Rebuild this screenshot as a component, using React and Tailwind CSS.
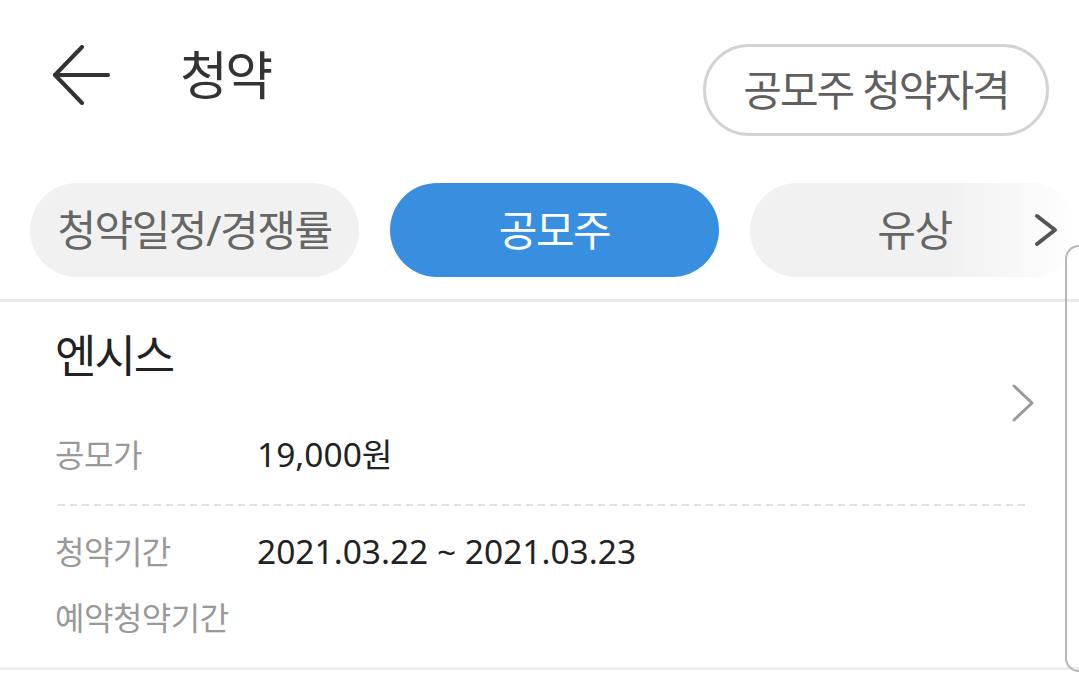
import React from 'react';

const rows = [
  { label: '공모가', value: '19,000원' },
];

function BackArrow() {
  return (
    <svg width="58" height="60" viewBox="0 0 58 60" fill="none" stroke="#333" strokeWidth="4" strokeLinecap="round" strokeLinejoin="round">
      <polyline points="29,2 2,30 29,58" />
      <line x1="2" y1="30" x2="55" y2="30" />
    </svg>
  );
}

function Chevron({ color, width, stroke, w, h }) {
  return (
    <svg width={w} height={h} viewBox={`0 0 ${w} ${h}`} fill="none" stroke={color} strokeWidth={stroke} strokeLinecap="round" strokeLinejoin="round">
      <polyline points={`${width},${width} ${w - width},${h / 2} ${width},${h - width}`} />
    </svg>
  );
}

export default function App() {
  return (
    <div className="relative w-full h-[693px] bg-white overflow-hidden font-['Noto_Sans','Noto_Sans_CJK_KR',sans-serif]">
      {/* header */}
      <div className="h-[183px] pt-[44px] pl-[53px] pr-[30px] flex items-start justify-between">
        <div className="flex items-center h-[60px] mt-[1px]">
          <BackArrow />
          <h1 className="ml-[69px] text-[52px] leading-none tracking-[-2.5px] text-[#333] font-normal">청약</h1>
        </div>
        <button className="w-[346px] h-[92px] rounded-full border-[3px] border-[#d3d3d3] bg-white flex items-center justify-center text-[42px] leading-none tracking-[-2px] text-[#5f5f5f]">
          공모주 청약자격
        </button>
      </div>

      {/* tabs */}
      <div className="relative flex gap-[31px] pl-[30px] h-[94px]">
        <div className="w-[329px] shrink-0 rounded-full bg-[#f1f1f1] flex items-center justify-center text-[42px] leading-none tracking-[-1.5px] text-[#666]">
          청약일정/경쟁률
        </div>
        <div className="w-[329px] shrink-0 rounded-full bg-[#388fdf] flex items-center justify-center text-[42px] leading-none tracking-[-1.5px] text-white">
          공모주
        </div>
        <div className="w-[329px] shrink-0 rounded-full bg-[#f1f1f1] flex items-center justify-center text-[42px] leading-none tracking-[-1.5px] text-[#666]">
          유상
        </div>
        <div className="absolute right-0 top-0 h-full w-[130px] bg-gradient-to-r from-transparent to-white flex items-center justify-end pr-[21px]">
          <Chevron color="#555" width={3} stroke={4} w={24} h={34} />
        </div>
      </div>

      <div className="mt-[22px] h-[3px] bg-[#e9e9e9]" />

      {/* card */}
      <div className="relative pl-[55px] pr-[54px] pt-[31px] pb-[24px]">
        <div className="text-[45px] leading-none tracking-[-2px] text-[#222]">엔시스</div>

        {rows.map(r => (
          <div key={r.label} className="mt-[52px] h-[50px] flex items-center">
            <span className="w-[202px] shrink-0 text-[32px] leading-none tracking-[-0.5px] text-[#999]">{r.label}</span>
            <span className="text-[33.5px] leading-none text-[#222]">{r.value}</span>
          </div>
        ))}

        <div className="mt-[24px] ml-[3px] h-[2px] bg-[repeating-linear-gradient(90deg,#e0e0e0_0_7px,transparent_7px_12px)]" />

        <div className="mt-[21px] h-[50px] flex items-center">
          <span className="w-[202px] shrink-0 text-[32px] leading-none tracking-[-0.5px] text-[#999]">청약기간</span>
          <span className="text-[33.5px] leading-none text-[#222]">2021.03.22 ~ 2021.03.23</span>
        </div>
        <div className="mt-[16px] h-[50px] flex items-center">
          <span className="w-[202px] shrink-0 text-[32px] leading-none tracking-[-0.5px] text-[#999]">예약청약기간</span>
        </div>

        <div className="absolute left-[1012px] top-[82px]">
          <Chevron color="#9a9a9a" width={2} stroke={3} w={22} h={38} />
        </div>
      </div>

      <div className="h-[3px] bg-[#efefef]" />

      {/* floating panel edge */}
      <div className="absolute left-[1065px] top-[245px] w-[40px] h-[427px] rounded-l-[14px] border-2 border-r-0 border-[#b8b8b8]" />
    </div>
  );
}
